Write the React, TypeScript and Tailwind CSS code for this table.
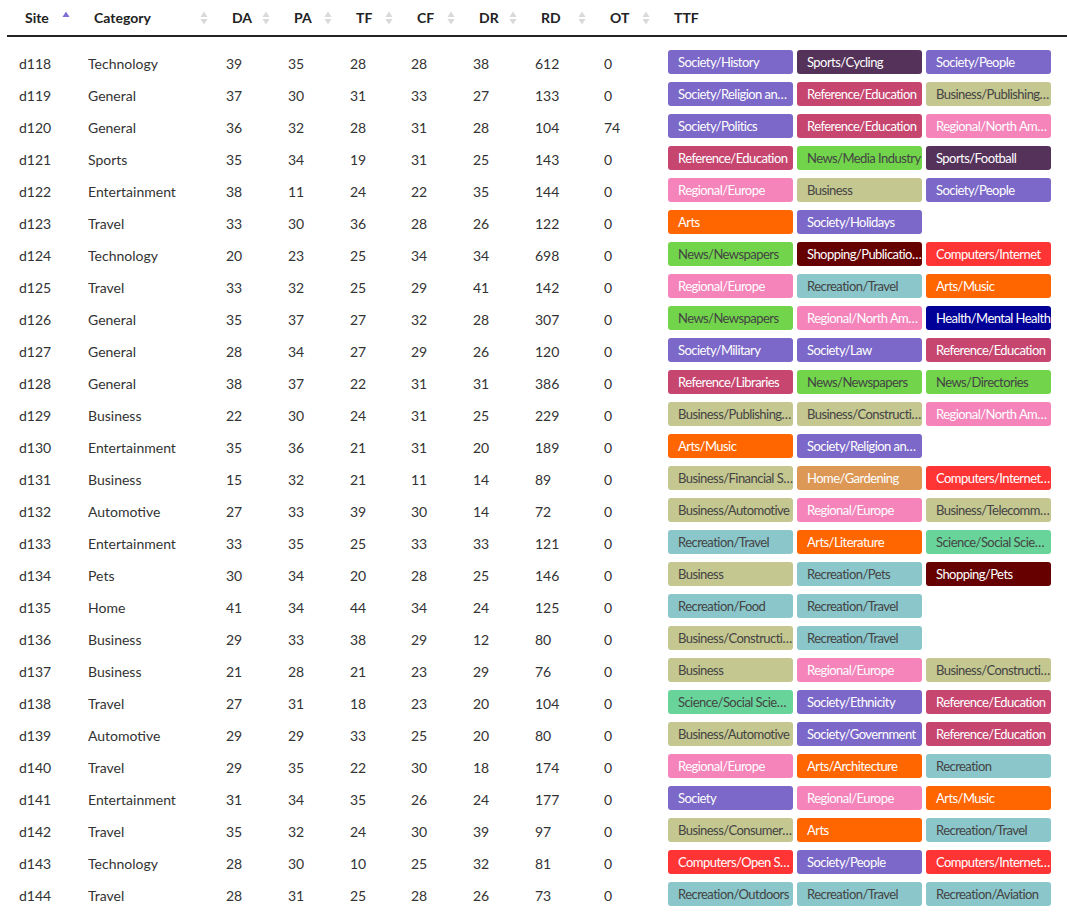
import React from "react";

type Tag = { label: string; tone: keyof typeof TONES };

const TONES = {
  society: "bg-[#7b68c9] text-white",
  sports: "bg-[#55325a] text-white",
  reference: "bg-[#c6466f] text-white",
  business: "bg-[#c5c790] text-[#444444]",
  regional: "bg-[#f484ba] text-white",
  news: "bg-[#71d44b] text-[#444444]",
  arts: "bg-[#ff6600] text-white",
  recreation: "bg-[#8ac6ca] text-[#444444]",
  computers: "bg-[#ff3435] text-white",
  health: "bg-[#000099] text-white",
  shopping: "bg-[#660000] text-white",
  home: "bg-[#dd9856] text-white",
  science: "bg-[#69d49a] text-[#444444]",
};

const t = (label: string, tone: keyof typeof TONES): Tag => ({ label, tone });

type Row = {
  site: string;
  category: string;
  nums: number[];
  ttf: Tag[];
};

const ROWS: Row[] = [
  { site: "d118", category: "Technology", nums: [39, 35, 28, 28, 38, 612, 0], ttf: [t("Society/History", "society"), t("Sports/Cycling", "sports"), t("Society/People", "society")] },
  { site: "d119", category: "General", nums: [37, 30, 31, 33, 27, 133, 0], ttf: [t("Society/Religion and Spirituality", "society"), t("Reference/Education", "reference"), t("Business/Publishing and Printing", "business")] },
  { site: "d120", category: "General", nums: [36, 32, 28, 31, 28, 104, 74], ttf: [t("Society/Politics", "society"), t("Reference/Education", "reference"), t("Regional/North America", "regional")] },
  { site: "d121", category: "Sports", nums: [35, 34, 19, 31, 25, 143, 0], ttf: [t("Reference/Education", "reference"), t("News/Media Industry", "news"), t("Sports/Football", "sports")] },
  { site: "d122", category: "Entertainment", nums: [38, 11, 24, 22, 35, 144, 0], ttf: [t("Regional/Europe", "regional"), t("Business", "business"), t("Society/People", "society")] },
  { site: "d123", category: "Travel", nums: [33, 30, 36, 28, 26, 122, 0], ttf: [t("Arts", "arts"), t("Society/Holidays", "society")] },
  { site: "d124", category: "Technology", nums: [20, 23, 25, 34, 34, 698, 0], ttf: [t("News/Newspapers", "news"), t("Shopping/Publications", "shopping"), t("Computers/Internet", "computers")] },
  { site: "d125", category: "Travel", nums: [33, 32, 25, 29, 41, 142, 0], ttf: [t("Regional/Europe", "regional"), t("Recreation/Travel", "recreation"), t("Arts/Music", "arts")] },
  { site: "d126", category: "General", nums: [35, 37, 27, 32, 28, 307, 0], ttf: [t("News/Newspapers", "news"), t("Regional/North America", "regional"), t("Health/Mental Health", "health")] },
  { site: "d127", category: "General", nums: [28, 34, 27, 29, 26, 120, 0], ttf: [t("Society/Military", "society"), t("Society/Law", "society"), t("Reference/Education", "reference")] },
  { site: "d128", category: "General", nums: [38, 37, 22, 31, 31, 386, 0], ttf: [t("Reference/Libraries", "reference"), t("News/Newspapers", "news"), t("News/Directories", "news")] },
  { site: "d129", category: "Business", nums: [22, 30, 24, 31, 25, 229, 0], ttf: [t("Business/Publishing and Printing", "business"), t("Business/Construction and Maintenance", "business"), t("Regional/North America", "regional")] },
  { site: "d130", category: "Entertainment", nums: [35, 36, 21, 31, 20, 189, 0], ttf: [t("Arts/Music", "arts"), t("Society/Religion and Spirituality", "society")] },
  { site: "d131", category: "Business", nums: [15, 32, 21, 11, 14, 89, 0], ttf: [t("Business/Financial Services", "business"), t("Home/Gardening", "home"), t("Computers/Internet/Web Design", "computers")] },
  { site: "d132", category: "Automotive", nums: [27, 33, 39, 30, 14, 72, 0], ttf: [t("Business/Automotive", "business"), t("Regional/Europe", "regional"), t("Business/Telecommunications", "business")] },
  { site: "d133", category: "Entertainment", nums: [33, 35, 25, 33, 33, 121, 0], ttf: [t("Recreation/Travel", "recreation"), t("Arts/Literature", "arts"), t("Science/Social Sciences", "science")] },
  { site: "d134", category: "Pets", nums: [30, 34, 20, 28, 25, 146, 0], ttf: [t("Business", "business"), t("Recreation/Pets", "recreation"), t("Shopping/Pets", "shopping")] },
  { site: "d135", category: "Home", nums: [41, 34, 44, 34, 24, 125, 0], ttf: [t("Recreation/Food", "recreation"), t("Recreation/Travel", "recreation")] },
  { site: "d136", category: "Business", nums: [29, 33, 38, 29, 12, 80, 0], ttf: [t("Business/Construction and Maintenance", "business"), t("Recreation/Travel", "recreation")] },
  { site: "d137", category: "Business", nums: [21, 28, 21, 23, 29, 76, 0], ttf: [t("Business", "business"), t("Regional/Europe", "regional"), t("Business/Construction and Maintenance", "business")] },
  { site: "d138", category: "Travel", nums: [27, 31, 18, 23, 20, 104, 0], ttf: [t("Science/Social Sciences", "science"), t("Society/Ethnicity", "society"), t("Reference/Education", "reference")] },
  { site: "d139", category: "Automotive", nums: [29, 29, 33, 25, 20, 80, 0], ttf: [t("Business/Automotive", "business"), t("Society/Government", "society"), t("Reference/Education", "reference")] },
  { site: "d140", category: "Travel", nums: [29, 35, 22, 30, 18, 174, 0], ttf: [t("Regional/Europe", "regional"), t("Arts/Architecture", "arts"), t("Recreation", "recreation")] },
  { site: "d141", category: "Entertainment", nums: [31, 34, 35, 26, 24, 177, 0], ttf: [t("Society", "society"), t("Regional/Europe", "regional"), t("Arts/Music", "arts")] },
  { site: "d142", category: "Travel", nums: [35, 32, 24, 30, 39, 97, 0], ttf: [t("Business/Consumer Goods and Services", "business"), t("Arts", "arts"), t("Recreation/Travel", "recreation")] },
  { site: "d143", category: "Technology", nums: [28, 30, 10, 25, 32, 81, 0], ttf: [t("Computers/Open Source", "computers"), t("Society/People", "society"), t("Computers/Internet/Web Design", "computers")] },
  { site: "d144", category: "Travel", nums: [28, 31, 25, 28, 26, 73, 0], ttf: [t("Recreation/Outdoors", "recreation"), t("Recreation/Travel", "recreation"), t("Recreation/Aviation", "recreation")] },
];

const NUM_COLS = ["DA", "PA", "TF", "CF", "DR", "RD", "OT"];

function SortIcon({ active }: { active?: boolean }) {
  if (active) {
    return (
      <svg width="8" height="16" viewBox="0 0 8 16" className="shrink-0">
        <path d="M0.5 7 L4 1.5 L7.5 7 Z" fill="#7b6fd6" />
      </svg>
    );
  }
  return (
    <svg width="8" height="16" viewBox="0 0 8 16" className="shrink-0">
      <path d="M0.5 7 L4 1.5 L7.5 7 Z" fill="#d9d9d9" />
      <path d="M0.5 9 L4 14.5 L7.5 9 Z" fill="#d9d9d9" />
    </svg>
  );
}

function Th({ label, active, sortable = true }: { label: string; active?: boolean; sortable?: boolean }) {
  return (
    <th className="h-[36px] border-b-2 border-[#222222] p-0 text-left align-middle font-bold">
      <div className="flex items-center justify-between pl-[18px] pr-[6px]">
        <span>{label}</span>
        {sortable && <SortIcon active={active} />}
      </div>
    </th>
  );
}

function Badge({ tag }: { tag: Tag }) {
  return (
    <div
      className={`h-[24px] w-[125px] shrink-0 overflow-hidden text-ellipsis whitespace-nowrap rounded-[3px] pl-[10px] pr-0 text-[13px] leading-[24px] tracking-[-0.55px] ${TONES[tag.tone]}`}
    >
      {tag.label}
    </div>
  );
}

export default function App() {
  return (
    <div className="bg-white pl-[7px] text-[14px] text-[#333333]" style={{ fontFamily: "Lato, 'Open Sans', sans-serif" }}>
      <table className="w-[1060px] table-fixed border-collapse">
        <colgroup>
          <col className="w-[69px]" />
          <col className="w-[138px]" />
          <col className="w-[62px]" />
          <col className="w-[62px]" />
          <col className="w-[61px]" />
          <col className="w-[62px]" />
          <col className="w-[62px]" />
          <col className="w-[69px]" />
          <col className="w-[64px]" />
          <col />
        </colgroup>
        <thead className="text-[#222222]">
          <tr>
            <Th label="Site" active />
            <Th label="Category" />
            {NUM_COLS.map((c) => (
              <Th key={c} label={c} />
            ))}
            <Th label="TTF" sortable={false} />
          </tr>
        </thead>
        <tbody>
          <tr>
            <td colSpan={10} className="h-[11px] p-0" />
          </tr>
          {ROWS.map((r) => (
            <tr key={r.site} className="h-[32px]">
              <td className="pl-[12px]">{r.site}</td>
              <td className="pl-[12px]">{r.category}</td>
              {r.nums.map((n, i) => (
                <td key={i} className="pl-[12px]">
                  {n}
                </td>
              ))}
              <td className="pl-[12px] align-top">
                <div className="mt-[3px] flex gap-[4px]">
                  {r.ttf.map((tag, i) => (
                    <Badge key={i} tag={tag} />
                  ))}
                </div>
              </td>
            </tr>
          ))}
        </tbody>
      </table>
    </div>
  );
}
